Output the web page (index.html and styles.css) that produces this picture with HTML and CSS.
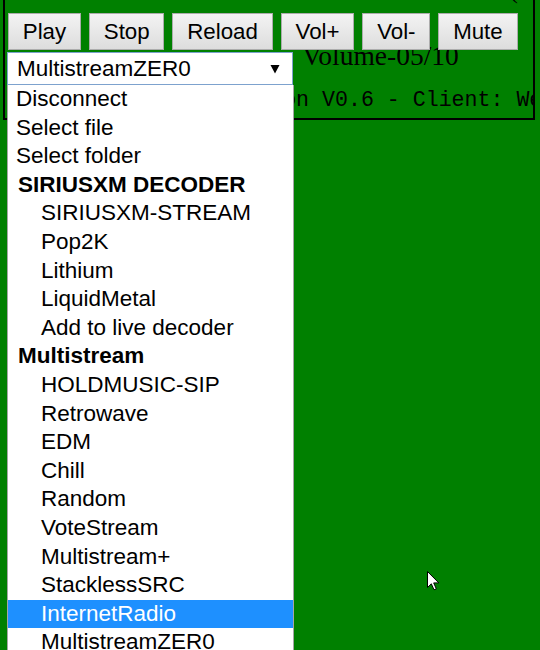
FILE: index.html
```html
<!DOCTYPE html>
<html>
<head>
<meta charset="utf-8">
<link rel="stylesheet" href="styles.css">
</head>
<body>
<div class="panel">
  <div class="header"><span class="paren">(</span></div>
  <div class="buttons">
    <button class="btn">Play</button>
    <button class="btn">Stop</button>
    <button class="btn">Reload</button>
    <button class="btn">Vol+</button>
    <button class="btn">Vol-</button>
    <button class="btn">Mute</button>
  </div>
  <div class="selrow">
    <div class="select">
      <span class="sel-text">MultistreamZER0</span>
      <svg class="arrow" width="10" height="10" viewBox="0 0 10 10"><polygon points="0.5,1 9.5,1 5,9.5" fill="#000"/></svg>
    </div>
    <span class="volume">Volume-05/10</span>
  </div>
  <div class="mono">SiriusXM Player Version V0.6 - Client: WebPlayer</div>
</div>

<div class="dropdown">
  <div class="opt">Disconnect</div>
  <div class="opt">Select file</div>
  <div class="opt">Select folder</div>
  <div class="group">SIRIUSXM DECODER</div>
  <div class="opt sub">SIRIUSXM-STREAM</div>
  <div class="opt sub">Pop2K</div>
  <div class="opt sub">Lithium</div>
  <div class="opt sub">LiquidMetal</div>
  <div class="opt sub">Add to live decoder</div>
  <div class="group">Multistream</div>
  <div class="opt sub">HOLDMUSIC-SIP</div>
  <div class="opt sub">Retrowave</div>
  <div class="opt sub">EDM</div>
  <div class="opt sub">Chill</div>
  <div class="opt sub">Random</div>
  <div class="opt sub">VoteStream</div>
  <div class="opt sub">Multistream+</div>
  <div class="opt sub">StacklessSRC</div>
  <div class="opt sub active">InternetRadio</div>
  <div class="opt sub">MultistreamZER0</div>
</div>

<svg class="cursor" width="13" height="20" viewBox="0 0 13 20"><path d="M0.5,0.5 L0.5,16.5 L4.3,12.8 L7,18.8 L9.3,17.8 L6.7,11.9 L11.8,11.9 Z" fill="#fff" stroke="#000" stroke-width="1" stroke-linejoin="miter"/></svg>
</body>
</html>
```

FILE: styles.css
```css
html, body {
  margin: 0;
  padding: 0;
}
body {
  background: #008000;
  width: 540px;
  height: 650px;
  overflow: hidden;
  position: relative;
  font-family: "Liberation Sans", Arial, sans-serif;
}
.panel {
  margin: -30px 0 0 3px;
  width: 528px;
  border: 2px solid #000;
  overflow: hidden;
}
.header {
  box-sizing: border-box;
  height: 41px;
  padding: 5px 15px 0 0;
  text-align: right;
  font-family: "Liberation Serif", serif;
  font-size: 26px;
  line-height: 26px;
}
.buttons {
  display: flex;
  gap: 8px;
  padding-left: 3px;
  position: relative;
  z-index: 1;
}
.btn {
  box-sizing: border-box;
  height: 37px;
  margin: 0;
  padding: 0 13.8px;
  font-family: "Liberation Sans", Arial, sans-serif;
  font-size: 22.3px;
  color: #000;
  border: 1px solid #acacac;
  border-radius: 0;
  background: linear-gradient(#f3f3f3, #dddddd);
}
.selrow {
  display: flex;
  align-items: flex-start;
  margin-top: 2px;
  padding-left: 2px;
}
.select {
  box-sizing: border-box;
  width: 286px;
  height: 33px;
  border: 1px solid #7da2ce;
  background: #fff;
  display: flex;
  align-items: center;
  justify-content: space-between;
  padding: 0 12px 0 9px;
  font-size: 22.5px;
}
.arrow {
  display: block;
}
.volume {
  font-family: "Liberation Serif", serif;
  font-size: 27.5px;
  line-height: 27.5px;
  margin: -10px 0 0 9px;
  white-space: nowrap;
}
.mono {
  font-family: "Liberation Mono", monospace;
  font-size: 21.6px;
  line-height: 30px;
  padding: 0 0 3px 6px;
  white-space: nowrap;
}
.dropdown {
  position: absolute;
  left: 7px;
  top: 85px;
  width: 285px;
  background: #fff;
  border-left: 1px solid #a5a5a5;
  border-right: 1px solid #a5a5a5;
  font-size: 22.5px;
  color: #000;
}
.opt, .group {
  height: 28.6px;
  line-height: 28.6px;
  white-space: nowrap;
  padding-left: 8px;
}
.group {
  font-weight: bold;
  padding-left: 10px;
}
.opt.sub {
  padding-left: 33px;
}
.opt.active {
  background: #1e90ff;
  color: #fff;
}
.cursor {
  position: absolute;
  left: 427px;
  top: 571px;
}
```
